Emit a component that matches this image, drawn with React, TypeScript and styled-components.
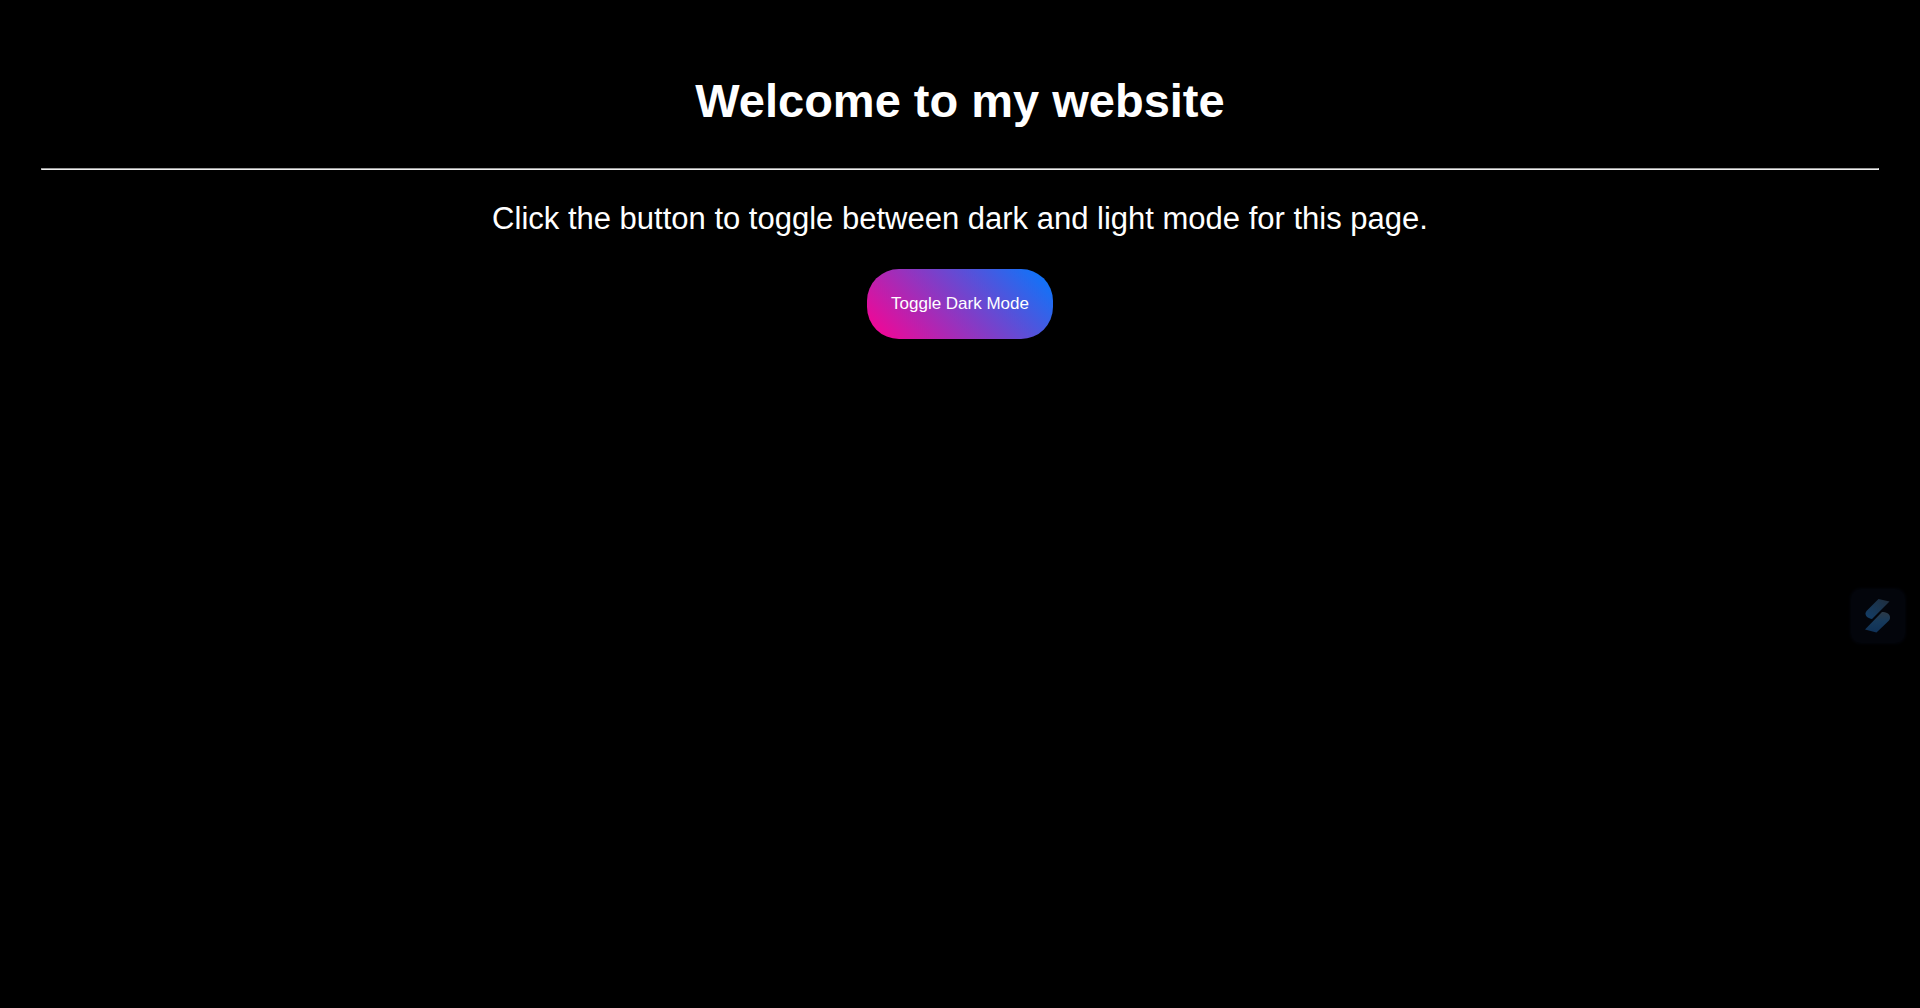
import React, { useState } from "react";
import styled, { createGlobalStyle } from "styled-components";

const GlobalStyle = createGlobalStyle<{ $dark: boolean }>`
  body {
    margin: 0;
    background: ${(p) => (p.$dark ? "#000" : "#fff")};
    color: ${(p) => (p.$dark ? "#fff" : "#000")};
    font-family: Arial, "Liberation Sans", sans-serif;
  }
`;

const Page = styled.main`
  padding: 73px 41px 40px;
  text-align: center;
`;

const Title = styled.h1`
  margin: 0;
  font-size: 47px;
  line-height: 56px;
  font-weight: 700;
`;

const Divider = styled.hr`
  margin: 39px 0 31px;
  border: 1px inset #eee;
`;

const Lead = styled.p`
  margin: 0;
  font-size: 31px;
  line-height: 36px;
`;

const ToggleButton = styled.button`
  margin-top: 32px;
  height: 70px;
  padding: 0 24px;
  border: 0;
  border-radius: 32px;
  background: linear-gradient(45deg, #ff0090, #007bff);
  color: #fff;
  font-family: inherit;
  font-size: 17px;
  line-height: 20px;
  cursor: pointer;
`;

const FloatingButton = styled.button`
  position: fixed;
  right: 15px;
  top: 589px;
  width: 54px;
  height: 54px;
  padding: 0;
  border: 0;
  border-radius: 10px;
  display: grid;
  place-items: center;
  background: #03050b;
  box-shadow: 0 0 3px 1px #03050b;
  cursor: pointer;
`;

const Logo = () => (
  <svg width="26" height="34" viewBox="0 0 26 34" aria-hidden="true">
    <defs>
      <linearGradient id="upper" x1="1" y1="0" x2="0" y2="1">
        <stop offset="0" stopColor="#202d3b" />
        <stop offset="1" stopColor="#123e69" />
      </linearGradient>
      <linearGradient id="lower" x1="0" y1="0" x2="0" y2="1">
        <stop offset="0" stopColor="#2c3a47" />
        <stop offset="0.45" stopColor="#173a5b" />
        <stop offset="1" stopColor="#0f3157" />
      </linearGradient>
    </defs>
    <path d="M13.5 0L24.5 2.5L7 20C3.500 19.500 .5 17.500 .5 14.500C.5 13.500 1 12.500 2 11.500Z" fill="url(#upper)" />
    <path d="M17 13C21 13 25 14.500 25 18.500C25 20 24.500 21 23.500 22L11.500 33.500L0 30.500Z" fill="url(#lower)" />
  </svg>
);

export default function App() {
  const [dark, setDark] = useState(true);
  return (
    <>
      <GlobalStyle $dark={dark} />
      <Page>
        <Title>Welcome to my website</Title>
        <Divider />
        <Lead>Click the button to toggle between dark and light mode for this page.</Lead>
        <ToggleButton type="button" onClick={() => setDark(!dark)}>
          Toggle Dark Mode
        </ToggleButton>
      </Page>
      <FloatingButton type="button" aria-label="Open assistant">
        <Logo />
      </FloatingButton>
    </>
  );
}
